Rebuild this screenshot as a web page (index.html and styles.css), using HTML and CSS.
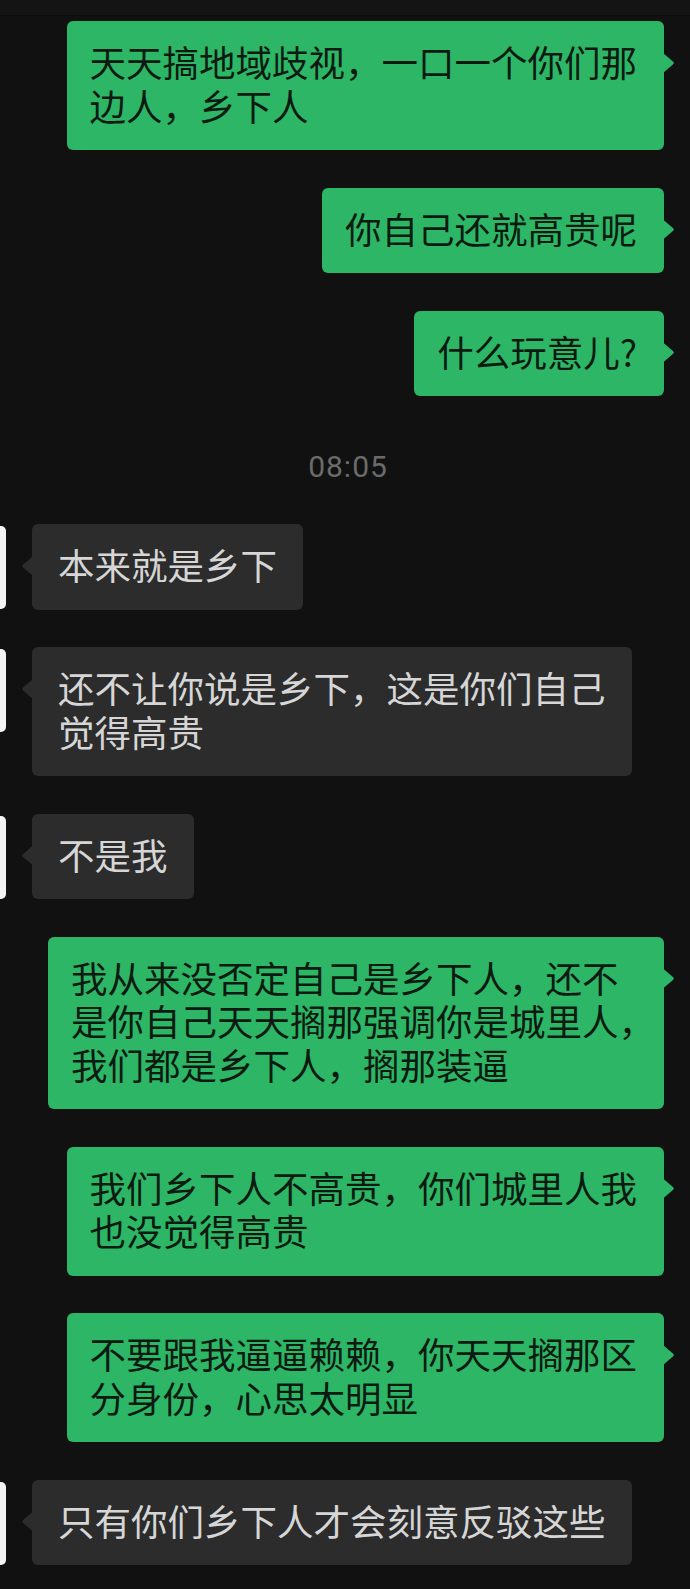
FILE: index.html
```html
<!DOCTYPE html>
<html lang="zh-CN">
<head>
    <meta charset="UTF-8">
    <meta name="viewport" content="width=device-width, initial-scale=1.0">
    <title>聊天</title>
    <link rel="stylesheet" href="styles.css">
</head>
<body>
  <div class="chat">
    <div class="chat-top"></div>
    <div class="messages">
        <div class="msg mine">
            <div class="bubble">天天搞地域歧视，一口一个你们那<br>边人，乡下人</div>
        </div>
        <div class="msg mine">
            <div class="bubble">你自己还就高贵呢</div>
        </div>
        <div class="msg mine">
            <div class="bubble">什么玩意儿?</div>
        </div>

        <div class="time">08:05</div>

        <div class="msg theirs">
            <div class="avatar"></div>
            <div class="bubble">本来就是乡下</div>
        </div>
        <div class="msg theirs">
            <div class="avatar"></div>
            <div class="bubble">还不让你说是乡下，这是你们自己<br>觉得高贵</div>
        </div>
        <div class="msg theirs">
            <div class="avatar"></div>
            <div class="bubble">不是我</div>
        </div>
        <div class="msg mine">
            <div class="bubble">我从来没否定自己是乡下人，还不<br>是你自己天天搁那强调你是城里人<span class="hang">，</span><br>我们都是乡下人，搁那装逼</div>
        </div>
        <div class="msg mine">
            <div class="bubble">我们乡下人不高贵，你们城里人我<br>也没觉得高贵</div>
        </div>
        <div class="msg mine">
            <div class="bubble">不要跟我逼逼赖赖，你天天搁那区<br>分身份，心思太明显</div>
        </div>
        <div class="msg theirs">
            <div class="avatar"></div>
            <div class="bubble">只有你们乡下人才会刻意反驳这些</div>
        </div>
    </div>
  </div>
</body>
</html>
```

FILE: styles.css
```css
* {
    margin: 0;
    padding: 0;
    box-sizing: border-box;
}

body {
    font-family: "Noto Sans CJK SC", "Noto Sans", sans-serif;
    background-color: #111111;
    width: 690px;
    height: 1589px;
    overflow: hidden;
}

.chat-top {
    height: 16px;
    background-color: #141414;
    border-bottom: 1px solid #0c0c0c;
}

/* Message list */
.messages {
    display: flex;
    flex-direction: column;
    gap: 37.5px;
    padding-top: 5px;
}

.msg {
    display: flex;
    align-items: flex-start;
}

.msg.mine {
    justify-content: flex-end;
    padding-right: 26px;
}

.msg.theirs {
    gap: 26px;
}

.avatar {
    width: 6px;
    height: 83px;
    margin-top: 2px;
    background-color: #f4f4f4;
    border-radius: 0 5px 5px 0;
}

.bubble {
    position: relative;
    padding: 19px 26px 23px;
    font-size: 36.5px;
    line-height: 43.5px;
    white-space: nowrap;
    border-radius: 6px;
}

.bubble::after {
    content: "";
    position: absolute;
    top: 32px;
    width: 11px;
    height: 20px;
}

.mine .bubble {
    padding-left: 23px;
    padding-right: 27px;
    background-color: #2cb666;
    color: #0d1a11;
}

.mine .bubble::after {
    right: -10px;
    background-color: #2cb666;
    clip-path: polygon(0 0, 90% 42%, 100% 50%, 90% 58%, 0 100%);
}

.theirs .bubble {
    background-color: #2c2c2c;
    color: #d6d6d6;
}

.theirs .bubble::after {
    left: -10px;
    background-color: #2c2c2c;
    clip-path: polygon(100% 0, 10% 42%, 0 50%, 10% 58%, 100% 100%);
}

.hang {
    margin-right: -18px;
}

.time {
    margin-top: 13px;
    padding-left: 6px;
    text-align: center;
    font-family: Roboto, "Noto Sans", sans-serif;
    font-size: 30px;
    line-height: 40px;
    letter-spacing: 1px;
    color: #6b6b6b;
}
```
